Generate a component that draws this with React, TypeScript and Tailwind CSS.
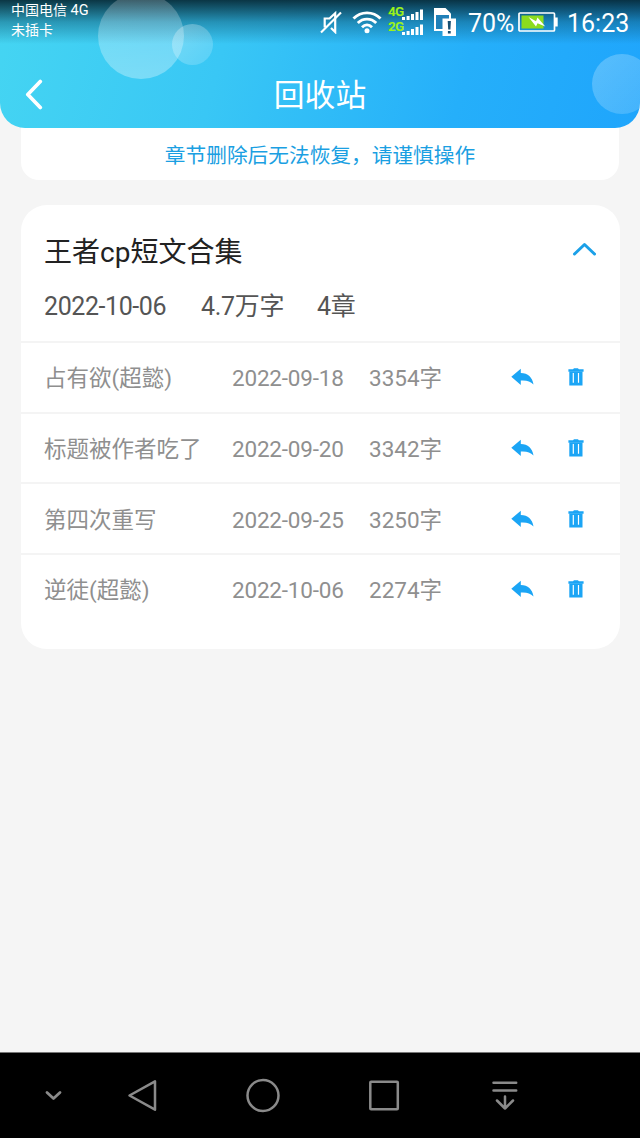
import React from "react";

const chapters = [
  { name: "占有欲(超懿)", date: "2022-09-18", words: "3354字" },
  { name: "标题被作者吃了", date: "2022-09-20", words: "3342字" },
  { name: "第四次重写", date: "2022-09-25", words: "3250字" },
  { name: "逆徒(超懿)", date: "2022-10-06", words: "2274字" },
];

function MuteIcon() {
  return (
    <svg width="22" height="24" viewBox="0 0 22 24" fill="none" stroke="white" strokeWidth="2.200">
      <path d="M11 18l4.200 4V3.200L9.500 8.500H4.700v8H6" />
      <path d="M1 22.500L21 2.500" strokeWidth="2.200" />
    </svg>
  );
}

function WifiIcon() {
  return (
    <svg width="30" height="24" viewBox="0 0 30 24" fill="none" stroke="white" strokeWidth="2.900">
      <path d="M1.500 8.600C9 1 21 1 28.500 8.600" />
      <path d="M5.800 13C11 7.800 19 7.800 24.200 13" />
      <path d="M10 17.200C13 14.300 17 14.300 20 17.200" />
      <circle cx="15" cy="20.800" r="2.500" fill="white" stroke="none" />
    </svg>
  );
}

function SignalBars() {
  return (
    <svg className="shrink-0" width="22" height="11" viewBox="0 0 22 11" fill="white">
      <path d="M0 8h3v3H0zM4.600 7h3v4h-3zM9 5h3v6H9zM13.500 3h3v8h-3zM18 0.500h3V11h-3z" />
    </svg>
  );
}

function NetworkRow({ label }: { label: string }) {
  return (
    <div className="flex h-[15px] items-start">
      <span className="w-[14px] text-[13.500px] leading-[11px] font-bold tracking-[-.8px] whitespace-nowrap text-[#9af21b]">{label}</span>
      <div className="pt-[3px]"><SignalBars /></div>
    </div>
  );
}

function SimIcon() {
  return (
    <svg width="24" height="30" viewBox="0 0 24 30">
      <path d="M1 1h11.500l5.500 5.500V24H1z" fill="white" />
      <path d="M3 8h13v14H3z" fill="#2080b8" />
      <path d="M9.500 11.500H23V29H9.500z" fill="white" />
      <path d="M14.700 14h3.200l-.5 8.500h-2.200zM14.900 24h2.800v2.600h-2.800z" fill="#174f73" />
    </svg>
  );
}

function BatteryIcon() {
  return (
    <svg width="40" height="21" viewBox="0 0 40 21">
      <rect x="1" y="1" width="35.500" height="18" rx="1" fill="none" stroke="white" strokeWidth="1.700" />
      <path d="M37 5.500h2.700v9H37z" fill="white" />
      <path d="M3.500 3.500h22v13h-22z" fill="#8cdc1e" />
      <path d="M10.500 5l7.500 4.200 1.500-3.700 7.800 9-7.800-3.200-1.500 3.200z" fill="white" />
    </svg>
  );
}

function StatusBar() {
  return (
    <div className="relative flex h-11 items-start justify-between bg-gradient-to-b from-[#052531]/90 via-[#0b506b]/45 to-transparent pr-[11px] pl-[11px] text-white">
      <div className="text-[14px] leading-[20px]">
        <div>中国电信 <span className="text-[14.500px]">4G</span></div>
        <div className="-mt-px">未插卡</div>
      </div>
      <div className="flex h-11 items-center">
        <div className="mr-[10px]"><MuteIcon /></div>
        <div className="mr-[6px] pb-px"><WifiIcon /></div>
        <div className="mr-[9px] pb-[2px]">
          <NetworkRow label="4G" />
          <NetworkRow label="2G" />
        </div>
        <div className="mr-[11px]"><SimIcon /></div>
        <span className="mr-[4px] w-[46px] pt-[3px] text-[25px] leading-none">70%</span>
        <div className="mr-[9px] pt-px"><BatteryIcon /></div>
        <span className="w-[62px] pt-[3px] text-[25px] leading-none">16:23</span>
      </div>
    </div>
  );
}

function Header() {
  return (
    <header className="relative z-10 h-32 overflow-hidden rounded-b-[25px] bg-[linear-gradient(105deg,#45d5f2_0%,#39c7f5_35%,#25affa_72%,#1fa5fc_100%)]">
      <StatusBar />
      <div className="absolute top-[-7px] left-[98px] size-[86px] rounded-full bg-gradient-to-b from-white/20 to-white/32" />
      <div className="absolute top-[24px] left-[172px] size-[41px] rounded-full bg-gradient-to-br from-white/30 to-white/15" />
      <div className="absolute top-[54px] left-[592px] size-[60px] rounded-full bg-gradient-to-br from-white/25 to-white/15" />
      <div className="relative grid h-[84px] grid-cols-[80px_1fr_80px] items-center text-white">
        <svg className="mt-[16px] ml-[24px]" width="20" height="32" viewBox="0 0 20 32" fill="none" stroke="white" strokeWidth="3.700" strokeLinecap="round" strokeLinejoin="round">
          <path d="M16.300 3.500L3.800 16.500l12.500 13" />
        </svg>
        <h1 className="mt-[20px] text-center text-[30.800px] leading-none">回收站</h1>
      </div>
    </header>
  );
}

function ReplyIcon() {
  return (
    <svg width="23" height="18" viewBox="0 0 23 18" fill="#1ba5f5">
      <path d="M.3 8.800L9.800.8v4.300c7.200 0 11.500 4.200 12.700 11.400-3.200-3.500-6.700-4.300-12.700-4v4.400z" />
    </svg>
  );
}

function TrashIcon() {
  return (
    <svg width="16" height="18" viewBox="0 0 16 18" fill="#1ba5f5">
      <path d="M.4 1.200h4.600L6 .2h3.900l1 1h4.700v2.600H.4z" />
      <path fillRule="evenodd" d="M1.300 3.500h13.200v13.900H1.300zM4.700 5v9.800h1.200V5zM9.900 5v9.800h1.200V5z" />
    </svg>
  );
}

function NavBar() {
  return (
    <nav className="flex h-[86px] items-center border-t border-[#777] bg-black text-[#8a8a8a]">
      <svg width="640" height="85" viewBox="0 0 640 85" fill="none" stroke="currentColor" strokeWidth="2.500" strokeLinecap="round" strokeLinejoin="round">
        <path d="M47 39.500l6.500 6 6.500-6" strokeWidth="2.800" />
        <path d="M155 28.300v28.400L129.500 42.500z" />
        <circle cx="263" cy="42.500" r="15.500" />
        <rect x="370.300" y="28.700" width="27.500" height="27.500" rx=".8" />
        <path d="M493.500 29.800h22.700M493.500 37.500h22.700M505 43.500v12M497 47.500l8 8 8-8" />
      </svg>
    </nav>
  );
}

export default function App() {
  return (
    <div className="flex h-[1138px] w-[640px] flex-col bg-[#f5f5f5] font-[Roboto,'Noto_Sans_CJK_SC',sans-serif]">
      <Header />
      <main className="flex-1 px-[21px]">
        <div className="-mt-[28px] h-[80px] rounded-[18px] bg-white pt-[43px] text-center text-[20.700px] leading-[26px] text-[#1b9fe2]">
          章节删除后无法恢复，请谨慎操作
        </div>
        <section className="mt-[25px] h-[444px] w-[599px] rounded-[26px] bg-white">
          <div className="h-[136px] px-6 pt-[28px]">
            <div className="flex items-center justify-between">
              <h2 className="-ml-px pt-px text-[28px] leading-[38px] text-[#222]">王者cp短文合集</h2>
              <svg className="mb-[7px]" width="24" height="16" viewBox="0 0 24 16" fill="none" stroke="#1ba0e8" strokeWidth="3" strokeLinecap="round" strokeLinejoin="round">
                <path d="M2.500 13L12.500 3.500 22.500 13" />
              </svg>
            </div>
            <div className="mt-[18px] -ml-px flex text-[25px] leading-[34px] text-[#555]">
              <span className="w-[157px] tracking-[-.42px]">2022-10-06</span>
              <span className="w-[116px] tracking-[-.3px]">4.7万字</span>
              <span className="tracking-[-.3px]">4章</span>
            </div>
          </div>
          {chapters.map((c) => (
            <div key={c.name} className="flex h-[70.700px] items-center border-t-2 border-[#f4f4f4] pt-[2px] pl-[23px] text-[22.500px] leading-[34px] text-[#8f8f8f]">
              <span className="w-[188px] whitespace-nowrap">{c.name}</span>
              <span className="w-[137px] tracking-[-.2px]">{c.date}</span>
              <span className="w-[142px]">{c.words}</span>
              <span className="mb-[2px] w-[57px]"><ReplyIcon /></span>
              <span className="mb-[2px]"><TrashIcon /></span>
            </div>
          ))}
        </section>
      </main>
      <NavBar />
    </div>
  );
}
